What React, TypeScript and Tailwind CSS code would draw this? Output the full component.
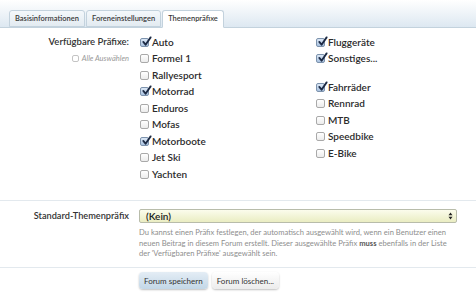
import React from "react";

const font = { fontFamily: "Lato, 'Liberation Sans', sans-serif" };

type Item = { label: string; checked?: boolean; gap?: boolean };

const colOne: Item[] = [
  { label: "Auto", checked: true },
  { label: "Formel 1" },
  { label: "Rallyesport" },
  { label: "Motorrad", checked: true },
  { label: "Enduros" },
  { label: "Mofas" },
  { label: "Motorboote", checked: true },
  { label: "Jet Ski" },
  { label: "Yachten" },
];

const colTwo: Item[] = [
  { label: "Fluggeräte", checked: true },
  { label: "Sonstiges...", checked: true },
  { label: "Fahrräder", checked: true, gap: true },
  { label: "Rennrad" },
  { label: "MTB" },
  { label: "Speedbike" },
  { label: "E-Bike" },
];

const Box = ({ checked, small }: { checked?: boolean; small?: boolean }) => (
  <span
    className={
      "relative inline-block shrink-0 rounded-[2px] border " +
      (small ? "w-[7px] h-[7px] border-[#c4c4c4] bg-white" : "w-[9px] h-[9px] ") +
      (!small && checked
        ? "border-[#7d93ad] bg-gradient-to-b from-[#dbe7f5] to-[#a9c2e0]"
        : !small
        ? "border-[#a9a9a9] bg-gradient-to-b from-white to-[#ececec]"
        : "")
    }
  >
    {checked && (
      <svg
        viewBox="0 0 12 12"
        className="absolute left-[0px] top-[-3px] w-[11px] h-[11px]"
      >
        <path
          d="M2.5 6.5 L5 9.5 L10.5 1.5"
          fill="none"
          stroke="#1c2a44"
          strokeWidth="2"
          strokeLinecap="round"
          strokeLinejoin="round"
        />
      </svg>
    )}
  </span>
);

const Tab = ({ label, active }: { label: string; active?: boolean }) => (
  <div
    className={
      "h-[17px] px-[5px] flex items-center border border-[#c3d2dd] rounded-t-[3px] text-[7.5px] font-semibold text-[#3a3a3a] " +
      (active
        ? "bg-white border-b-white -mb-px h-[18px]"
        : "bg-gradient-to-b from-[#f4f8fb] to-[#e3ebf1]")
    }
  >
    {label}
  </div>
);

const Row = ({ item }: { item: Item }) => (
  <div
    className={
      "h-[16.5px] flex items-center gap-[3px] text-[10px] font-semibold text-[#2b2b2b] " +
      (item.gap ? "mt-[12px]" : "")
    }
  >
    <Box checked={item.checked} />
    <span>{item.label}</span>
  </div>
);

export default function App() {
  return (
    <div className="w-[476px] h-[300px] bg-white overflow-hidden" style={font}>
      <div className="h-[28px] bg-gradient-to-b from-white to-[#dde8f1] border-b border-[#c3d2dd] flex items-end pl-[9px] gap-[1px]">
        <Tab label="Basisinformationen" />
        <Tab label="Foreneinstellungen" />
        <Tab label="Themenpräfixe" active />
      </div>

      <div className="flex pt-[6px] h-[172px]">
        <div className="w-[140px] pr-[11px] flex flex-col items-end">
          <div className="h-[16.5px] flex items-center text-[9.5px] font-semibold text-[#333]">
            Verfügbare Präfixe:
          </div>
          <div className="h-[16.5px] flex items-center gap-[3px] text-[7.5px] italic text-[#9a9a9a]">
            <Box small />
            <span>Alle Auswählen</span>
          </div>
        </div>
        <div className="w-[176px] flex flex-col">
          {colOne.map((item) => (
            <Row key={item.label} item={item} />
          ))}
        </div>
        <div className="flex flex-col">
          {colTwo.map((item) => (
            <Row key={item.label} item={item} />
          ))}
        </div>
      </div>

      <div className="border-t border-[#e3e9ee] pt-[8px] h-[67px] flex">
        <div className="w-[139px] pr-[10px] flex justify-end h-[14px] items-center text-[9.2px] font-semibold text-[#333]">
          Standard-Themenpräfix
        </div>
        <div className="w-[318px] flex flex-col">
          <div className="h-[14px] rounded-[2px] border border-[#b8bcaa] bg-gradient-to-b from-[#fbfcec] to-[#eaedc2] flex items-center justify-between pl-[6px] pr-[3px] text-[10px] font-semibold text-[#222]">
            <span>(Kein)</span>
            <svg viewBox="0 0 6 10" className="w-[5px] h-[8px]">
              <path d="M3 0.5 L5.5 4 L0.5 4 Z M3 9.5 L5.5 6 L0.5 6 Z" fill="#222" />
            </svg>
          </div>
          <p className="mt-[4px] text-[7.6px] leading-[10.5px] text-[#8e8e8e]">
            Du kannst einen Präfix festlegen, der automatisch ausgewählt wird, wenn ein Benutzer einen
            neuen Beitrag in diesem Forum erstellt. Dieser ausgewählte Präfix{" "}
            <b className="text-[#555]">muss</b> ebenfalls in der Liste der 'Verfügbaren Präfixe' ausgewählt sein.
          </p>
        </div>
      </div>

      <div className="border-t border-[#e3e9ee] pt-[4px] pl-[139px] flex gap-[4px]">
        <button className="h-[17px] px-[5px] rounded-[4px] bg-gradient-to-b from-[#e4edf5] to-[#c3d7e7] text-[8px] text-[#333] shadow-[0_1px_2px_rgba(0,0,0,0.25)]">
          Forum speichern
        </button>
        <button className="h-[17px] px-[5px] rounded-[4px] bg-gradient-to-b from-white to-[#ececec] text-[8px] text-[#333] shadow-[0_1px_2px_rgba(0,0,0,0.25)]">
          Forum löschen...
        </button>
      </div>
    </div>
  );
}
